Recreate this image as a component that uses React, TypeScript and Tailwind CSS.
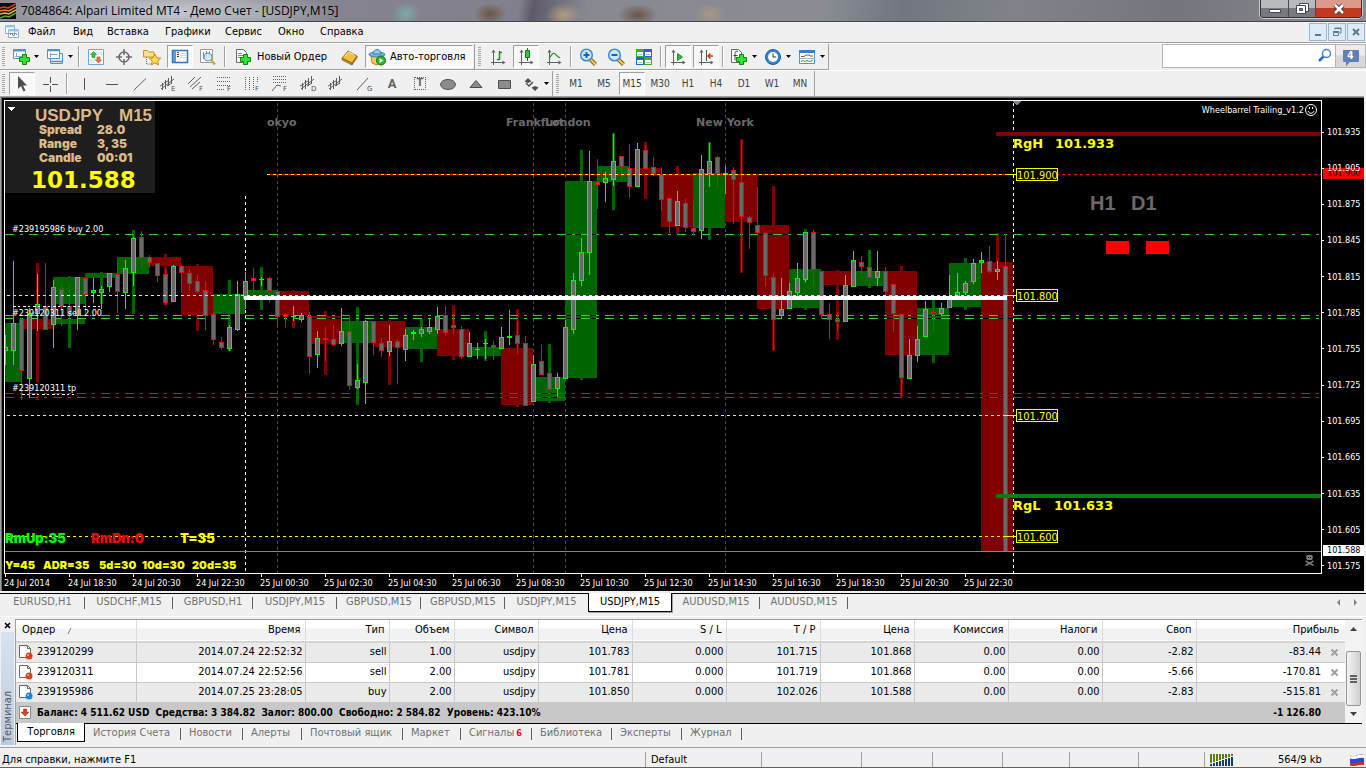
import type { ReactNode } from "react";

const ui = "font-['DejaVu_Sans_Condensed','Noto_Sans',sans-serif]";

// [high, open, close, low] measured from the top of the chart, one entry per bar
const candles: number[][] = [
    [235, 251, 247, 265], [161, 251, 223, 265], [218, 219, 271, 300], [208, 279, 214, 298],
    [174, 214, 204, 231], [163, 206, 230, 230], [180, 225, 187, 248], [184, 189, 207, 226],
    [185, 206, 216, 226], [177, 216, 177, 230], [178, 178, 195, 213], [178, 193, 190, 203],
    [186, 193, 189, 209], [173, 187, 173, 192], [162, 174, 192, 213], [160, 193, 168, 209],
    [137, 173, 138, 186], [131, 137, 158, 169], [155, 157, 163, 168], [163, 163, 176, 182],
    [169, 174, 203, 205], [165, 202, 166, 202], [165, 166, 173, 192], [169, 173, 184, 191],
    [175, 181, 192, 193], [181, 190, 216, 230], [212, 214, 240, 245], [237, 242, 248, 250],
    [225, 249, 227, 251], [181, 230, 194, 231], [172, 199, 181, 209], [168, 178, 181, 193],
    [177, 180, 179, 186], [177, 178, 191, 202], [191, 191, 217, 228], [213, 214, 217, 227],
    [206, 217, 216, 221], [213, 220, 215, 222], [212, 216, 257, 274], [231, 255, 238, 268],
    [227, 238, 240, 261], [225, 239, 245, 246], [208, 244, 231, 246], [215, 231, 286, 290],
    [264, 288, 280, 289], [220, 283, 221, 304], [221, 221, 243, 255], [238, 243, 251, 257],
    [225, 252, 241, 256], [239, 241, 248, 284], [229, 250, 235, 261], [230, 234, 232, 240],
    [227, 234, 229, 237], [219, 232, 227, 234], [207, 230, 216, 234], [206, 215, 233, 236],
    [214, 225, 228, 234], [226, 229, 257, 259], [232, 257, 243, 257], [243, 250, 249, 259],
    [239, 244, 243, 259], [241, 245, 248, 260], [227, 249, 237, 249], [210, 238, 236, 245],
    [221, 235, 244, 254], [236, 243, 306, 306], [255, 302, 264, 302], [245, 261, 275, 275],
    [268, 273, 290, 292], [273, 289, 277, 297], [220, 279, 227, 279], [173, 230, 180, 234],
    [138, 181, 152, 186], [51, 153, 81, 175], [59, 82, 85, 109], [72, 83, 78, 102],
    [34, 80, 61, 86], [56, 56, 67, 81], [44, 68, 87, 98], [43, 87, 49, 87],
    [45, 50, 69, 69], [57, 67, 74, 76], [67, 74, 100, 111], [98, 98, 122, 133],
    [91, 126, 101, 126], [99, 103, 128, 132], [105, 128, 132, 135], [55, 131, 69, 139],
    [43, 74, 61, 87], [56, 57, 74, 87], [66, 75, 73, 94], [67, 70, 80, 124],
    [40, 82, 117, 172], [116, 117, 123, 149], [87, 125, 133, 134], [132, 133, 176, 187],
    [173, 177, 220, 250], [178, 216, 209, 219], [183, 209, 191, 209], [163, 193, 178, 196],
    [132, 180, 132, 182], [130, 132, 170, 187], [171, 171, 215, 219], [203, 214, 220, 239],
    [212, 219, 222, 232], [175, 222, 185, 222], [151, 187, 160, 187], [156, 162, 167, 174],
    [150, 167, 178, 187], [151, 178, 171, 186], [167, 171, 192, 196], [184, 184, 214, 232],
    [214, 214, 278, 296], [239, 279, 255, 279], [226, 256, 239, 262], [201, 237, 209, 237],
    [208, 212, 214, 232], [203, 214, 208, 216], [175, 208, 196, 208], [173, 197, 192, 197],
    [181, 193, 183, 195], [159, 182, 163, 184], [152, 163, 160, 173], [146, 161, 172, 173],
    [161, 172, 169, 180], [134, 166, 452, 452]
];

// hourly bars behind the candles, same order of values
const hours: number[][] = [
    [163, 219, 229, 300], [176, 224, 177, 248], [172, 178, 173, 209], [130, 174, 157, 214],
    [154, 157, 166, 205], [164, 166, 215, 231], [180, 214, 194, 251], [167, 197, 190, 210],
    [190, 191, 215, 228], [211, 216, 244, 275], [207, 243, 221, 305], [220, 221, 247, 285],
    [218, 249, 227, 262], [205, 229, 256, 260], [231, 256, 247, 261], [209, 248, 305, 307],
    [244, 301, 277, 303], [50, 278, 81, 280], [33, 82, 66, 110], [42, 68, 73, 99],
    [66, 74, 127, 134], [42, 128, 73, 140], [39, 74, 122, 173], [86, 125, 209, 251],
    [129, 208, 169, 210], [170, 171, 185, 240], [150, 186, 171, 188], [166, 171, 255, 297],
    [200, 255, 208, 263], [158, 207, 163, 210], [133, 162, 451, 452]
];

const orderLines = [
    { y: 134, color: "#32cd32" },
    { y: 215, color: "#32cd32" },
    { y: 218, color: "#32cd32" },
    { y: 293, color: "#ff0000" },
    { y: 297, color: "#ff0000" }
];

const levels = [
    { y: 74, x: 263, label: "101.900" },
    { y: 195, x: 3, label: "101.800" },
    { y: 315, x: 3, label: "101.700" },
    { y: 436, x: 3, label: "101.600" }
];

const prices = [
    "101.935", "101.905", "101.875", "101.845", "101.815", "101.785", "101.755",
    "101.725", "101.695", "101.665", "101.635", "101.605", "101.575"
];

const times = [
    "24 Jul 2014", "24 Jul 18:30", "24 Jul 20:30", "24 Jul 22:30", "25 Jul 00:30", "25 Jul 02:30",
    "25 Jul 04:30", "25 Jul 06:30", "25 Jul 08:30", "25 Jul 10:30", "25 Jul 12:30", "25 Jul 14:30",
    "25 Jul 16:30", "25 Jul 18:30", "25 Jul 20:30", "25 Jul 22:30"
];

const chartTabs = [
    { label: "EURUSD,H1", width: "w-[85px]" },
    { label: "USDCHF,M15", width: "w-[88px]" },
    { label: "GBPUSD,H1", width: "w-[80px]" },
    { label: "USDJPY,M15", width: "w-[84px]" },
    { label: "GBPUSD,M15", width: "w-[84px]" },
    { label: "GBPUSD,M15", width: "w-[84px]" },
    { label: "USDJPY,M15", width: "w-[83px]" },
    { label: "USDJPY,M15", width: "w-[84px]", active: true },
    { label: "AUDUSD,M15", width: "w-[88px]" },
    { label: "AUDUSD,M15", width: "w-[88px]" }
];

const terminalTabs = [
    { label: "История Счета", width: "w-[96px]" },
    { label: "Новости", width: "w-[62px]" },
    { label: "Алерты", width: "w-[59px]" },
    { label: "Почтовый ящик", width: "w-[101px]" },
    { label: "Маркет", width: "w-[58px]" },
    { label: "Сигналы", width: "w-[71px]", count: 6 },
    { label: "Библиотека", width: "w-[80px]" },
    { label: "Эксперты", width: "w-[70px]" },
    { label: "Журнал", width: "w-[60px]" }
];

const columns = [
    { label: "Время", width: "w-[169px]" },
    { label: "Тип", width: "w-[84px]" },
    { label: "Объем", width: "w-[65px]" },
    { label: "Символ", width: "w-[84px]" },
    { label: "Цена", width: "w-[94px]" },
    { label: "S / L", width: "w-[94px]" },
    { label: "T / P", width: "w-[94px]" },
    { label: "Цена", width: "w-[94px]" },
    { label: "Комиссия", width: "w-[94px]" },
    { label: "Налоги", width: "w-[94px]" },
    { label: "Своп", width: "w-[94px]" }
];

const orders = [
    { id: "239120299", cells: ["2014.07.24 22:52:32", "sell", "1.00", "usdjpy", "101.783", "0.000", "101.715", "101.868", "0.00", "0.00", "-2.82"], profit: "-83.44" },
    { id: "239120311", cells: ["2014.07.24 22:52:56", "sell", "2.00", "usdjpy", "101.781", "0.000", "101.719", "101.868", "0.00", "0.00", "-5.66"], profit: "-170.81" },
    { id: "239195986", cells: ["2014.07.25 23:28:05", "buy", "2.00", "usdjpy", "101.850", "0.000", "102.026", "101.588", "0.00", "0.00", "-2.83"], profit: "-515.81" }
];

function Icon({ children, size = 18 }: { children: ReactNode; size?: number }) {
    return (
        <svg width={size} height={size} viewBox={`0 0 ${size} ${size}`} fill="none" className="shrink-0" aria-hidden="true">
            {children}
        </svg>
    );
}

function Caret() {
    return (
        <svg width="5" height="3" viewBox="0 0 5 3" className="shrink-0" aria-hidden="true">
            <path d="M0 0h5L2.500 3z" fill="#000" />
        </svg>
    );
}

function Plus({ x, y }: { x: number; y: number }) {
    return (
        <path
            transform={`translate(${x} ${y})`}
            d="M3.500 .5h4v3h3v4h-3v3h-4v-3h-3v-4h3z"
            fill="#2ee52e"
            stroke="#0a8a0a"
        />
    );
}

function Tool({ label, pressed, caret, children }: { label: string; pressed?: boolean; caret?: boolean; children: ReactNode }) {
    return (
        <button
            type="button"
            aria-label={label}
            aria-pressed={pressed}
            className={`mx-px flex h-[23px] items-center justify-center gap-1 ${caret ? "w-[32px]" : "w-[26px]"} ${pressed ? "border border-[#a0a0a0] border-r-white border-b-white bg-[#f8f8f8]" : ""}`}
        >
            {children}
            {caret && <Caret />}
        </button>
    );
}

function Sep() {
    return <div className="mx-[2px] h-[21px] w-[2px] border-l border-[#a0a0a0] bg-white" />;
}

function Grip() {
    return <div className="mr-[3px] ml-[2px] h-[20px] w-[3px] shrink-0 bg-[repeating-linear-gradient(#a8a8a8_0_1px,#f0f0f0_1px_2px)]" />;
}

function Axes({ children }: { children?: ReactNode }) {
    return (
        <Icon>
            <path d="M4.500 3v14M2 14.500h13" stroke="#606060" />
            <path d="M4.500 1.500L2.500 4.500h4zM16.500 14.500l-3-2v4z" fill="#606060" />
            {children}
        </Icon>
    );
}

function Magnifier({ sign }: { sign: string }) {
    return (
        <Icon>
            <path d="M11 11l5.500 5.500" stroke="#8a6510" strokeWidth="4" />
            <path d="M11.500 11.500l5 5" stroke="#f3cf4a" strokeWidth="2" />
            <circle cx="7.500" cy="7" r="5.800" fill="#cfe8fb" stroke="#3d8ad6" strokeWidth="1.500" />
            <path d={sign} stroke="#1c62b5" strokeWidth="2" />
        </Icon>
    );
}

function Wave({ letter }: { letter?: string }) {
    return (
        <Icon>
            <path d="M2 14L15 4M3.500 8v7M6.500 5v9M9.500 3v8M12.500 1v8M1 11l4-2M5 8l4-2M8 11l5-3" stroke="#5c5c5c" />
            {letter && <Letter>{letter}</Letter>}
        </Icon>
    );
}

function Letter({ children }: { children: ReactNode }) {
    return (
        <text x="12" y="16" fill="#505050" className="font-['DejaVu_Sans'] text-[7px]">
            {children}
        </text>
    );
}

function TitleBar() {
    return (
        <header className="flex h-[22px] items-start border-b border-[#45464c] bg-[radial-gradient(ellipse_170px_24px_at_170px_12px,#c6cace_0%,#aeb1b8cc_60%,transparent_100%),radial-gradient(ellipse_16px_11px_at_490px_14px,#6b5641,transparent),radial-gradient(ellipse_18px_12px_at_564px_15px,#b09d82,transparent),radial-gradient(ellipse_20px_11px_at_638px_15px,#6a5546,transparent),radial-gradient(ellipse_16px_11px_at_710px_14px,#a89782,transparent),radial-gradient(ellipse_14px_12px_at_406px_14px,#7fa9a8,transparent),linear-gradient(100deg,#8d8f98_0,#85838f_26%,#82808b_38%,#5f5a6b_39%,#878991_43%,#8a8d94_60%,#71767f_66%,#808389_74%,#73767d_86%,#8b8c91_100%)]">
            <svg width="16" height="16" viewBox="0 0 16 16" className="mt-[3px] shrink-0" aria-hidden="true">
                <path d="M0 0h16v16H0z" fill="#100c08" />
                <path d="M0 5l4-1 4 1 8-4" stroke="#e9342a" strokeWidth="1.500" fill="none" />
                <path d="M0 8l5-1 4 1 7-4" stroke="#ee7a26" strokeWidth="1.500" fill="none" />
                <path d="M0 11l5-1 4 1 7-4" stroke="#d8c42e" strokeWidth="1.500" fill="none" />
                <path d="M0 15l5-2 4 1 7-4" stroke="#58a832" strokeWidth="1.500" fill="none" />
            </svg>
            <h1 className="ml-[5px] flex-1 font-['Open_Sans','Noto_Sans',sans-serif] text-[12px] leading-[21px] text-black">
                7084864: Alpari Limited MT4 - Демо Счет - [USDJPY,M15]
            </h1>
            <div className="mr-1 flex h-[18px] overflow-hidden rounded-b-[4px] border border-t-0 border-[#33343a] shadow-[0_0_0_1px_#c8c9cc]">
                <button type="button" aria-label="Свернуть" className="flex w-[28px] items-center justify-center border-r border-[#4a4b52] bg-linear-to-b from-[#b9babd] from-45% to-[#77797e] to-50%">
                    <Icon size={14}>
                        <path d="M1.500 7.500h11v3h-11z" fill="#fff" stroke="#45485a" />
                    </Icon>
                </button>
                <button type="button" aria-label="Восстановить" className="flex w-[27px] items-center justify-center border-r border-[#4a4b52] bg-linear-to-b from-[#b9babd] from-45% to-[#77797e] to-50%">
                    <Icon size={14}>
                        <path d="M4.500 1.500h9v8h-9z" fill="#fff" stroke="#45485a" />
                        <path d="M1.500 3.500h9v8h-9z" fill="#fff" stroke="#45485a" />
                        <path d="M4.500 6.500h3v2h-3z" fill="#8b8d93" stroke="#45485a" />
                    </Icon>
                </button>
                <button type="button" aria-label="Закрыть" className="flex w-[45px] items-center justify-center bg-linear-to-b from-[#dd9a8c] from-45% to-[#bf3a1f] to-50%">
                    <Icon size={14}>
                        <path d="M3 3l8 8M11 3l-8 8" stroke="#45364a" strokeWidth="4.500" />
                        <path d="M3 3l8 8M11 3l-8 8" stroke="#fff" strokeWidth="2.500" />
                    </Icon>
                </button>
            </div>
        </header>
    );
}

function MenuBar() {
    const mdi = "flex h-[18px] w-[18px] items-center justify-center border border-[#a3b4c8] bg-[#dcebf9]";
    return (
        <nav className="flex h-[21px] items-center border-b border-[#a0a0a0]">
            <div className="ml-[4px] w-[17px]">
                <Icon size={16}>
                    <path d="M1.500 1.500h9v8h-9zM4.500 5.500h10v8h-10z" fill="#fff" stroke="#7fb2e6" />
                    <path d="M1 2.500h10M4 6.500h11" stroke="#9cc6ee" strokeWidth="2" />
                    <path d="M6 11l1.500-2 2 3 2-3 1.500 2" stroke="#3d85cc" />
                </Icon>
            </div>
            <div className="flex pt-px text-[11px]">
                <a href="#file" className="ml-[7px] w-[45px]">Файл</a>
                <a href="#view" className="w-[34px]">Вид</a>
                <a href="#insert" className="w-[58px]">Вставка</a>
                <a href="#charts" className="w-[60px]">Графики</a>
                <a href="#service" className="w-[53px]">Сервис</a>
                <a href="#window" className="w-[42px]">Окно</a>
                <a href="#help">Справка</a>
            </div>
            <div className="mr-[1px] ml-auto flex gap-px">
                <button type="button" aria-label="Свернуть окно" className={mdi}>
                    <Icon size={12}><path d="M3 9h6" stroke="#63788e" strokeWidth="2" /></Icon>
                </button>
                <button type="button" aria-label="Восстановить окно" className={mdi}>
                    <Icon size={12}><path d="M4 3.500V2h6v5H8.500M2.500 6.500h5v3h-5zM2 5.500h6M4 2.500h6" stroke="#63788e" /></Icon>
                </button>
                <button type="button" aria-label="Закрыть окно" className={mdi}>
                    <Icon size={12}><path d="M3 3l6 6M9 3L3 9" stroke="#63788e" strokeWidth="2" /></Icon>
                </button>
            </div>
        </nav>
    );
}

function MainToolbar() {
    return (
        <div className="flex h-[27px] items-start border-t border-white">
            <div className="flex h-[26px] items-center border-r border-b border-[#a0a0a0]">
                <Grip />
                <Tool label="Новый график" caret>
                    <Icon>
                        <path d="M1.500 1.500h12v9h-12z" fill="#fff" stroke="#4f93cf" />
                        <path d="M1 2.500h13" stroke="#4f93cf" strokeWidth="2" />
                        <path d="M4.500 5v4M3 8.500h7" stroke="#8aa8c4" />
                        <Plus x={7} y={6} />
                    </Icon>
                </Tool>
                <Tool label="Профили" caret>
                    <Icon>
                        <path d="M4.500 5.500h12v10h-12z" fill="#e8f2fb" stroke="#4f93cf" />
                        <path d="M1.500 1.500h12v9h-12z" fill="#fff" stroke="#4f93cf" />
                        <path d="M1 2.500h13M4 13.500h12" stroke="#4f93cf" strokeWidth="1.500" />
                        <path d="M4 6.500h7M4.500 5v4" stroke="#7aa6cc" />
                    </Icon>
                </Tool>
                <Sep />
                <Tool label="Обзор рынка">
                    <Icon>
                        <path d="M1.500 1.500h15v15h-15z" fill="#fff" stroke="#6aa6da" />
                        <path d="M9 4h6M9 6h6M3 12h6M3 14h5" stroke="#c9dced" />
                        <path d="M6.500 3.500l3 3h-1.500v3h-3v-3H3.500z" fill="#3cc63c" stroke="#168516" strokeWidth=".6" />
                        <path d="M11.500 15l3-3h-1.500V9h-3v3H8.500z" fill="#f47a3a" stroke="#c7380b" strokeWidth=".6" />
                    </Icon>
                </Tool>
                <Tool label="Окно данных">
                    <Icon>
                        <circle cx="9" cy="9" r="5" stroke="#6a6a6a" strokeWidth="1.500" />
                        <path d="M9 1v6M9 11v6M1 9h6M11 9h6" stroke="#6a6a6a" strokeWidth="1.500" />
                    </Icon>
                </Tool>
                <Tool label="Навигатор">
                    <Icon>
                        <path d="M.5 2.500h4l1.500 1.500h5v5H.5z" fill="#f8e08a" stroke="#c59a26" />
                        <path d="M3.500 9v7h4" stroke="#6a6a6a" strokeDasharray="1 1" />
                        <path d="M12 6l1.800 3.700 4 .5-3 2.700.8 4-3.600-2-3.600 2 .8-4-3-2.700 4-.5z" fill="#fbd84c" stroke="#c08f1c" />
                    </Icon>
                </Tool>
                <Tool label="Терминал" pressed>
                    <Icon>
                        <path d="M1.500 2.500h15v12h-15z" fill="#fff" stroke="#2f78c0" strokeWidth="1.500" />
                        <path d="M2 3h3v11H2z" fill="#5b9bd8" />
                        <path d="M9 5.500h6M9 7.500h6M9 9.500h6" stroke="#c3d3e2" strokeWidth=".7" />
                        <path d="M6 4.500h2" stroke="#d22" />
                        <path d="M6 6.500h2M6 8.500h2" stroke="#333" />
                    </Icon>
                </Tool>
                <Tool label="Тестер стратегий">
                    <Icon>
                        <path d="M1.500 1.500h12v13h-12z" fill="#fff" stroke="#9a9a9a" />
                        <path d="M4.500 4v7M7.500 3v7M10.500 3v6" stroke="#8a8a8a" />
                        <path d="M12 12l4 4.500" stroke="#d7a82c" strokeWidth="2.500" />
                        <circle cx="9" cy="9" r="4" fill="#cde7f8cc" stroke="#5f9bcd" />
                    </Icon>
                </Tool>
                <Sep />
                <button type="button" className="flex h-[23px] w-[108px] items-center gap-1 pl-[7px] text-[11px] whitespace-nowrap">
                    <Icon>
                        <path d="M1.500 1.500h7l3 3v10h-10z" fill="#fff" stroke="#6a6a6a" />
                        <path d="M3 5.500h4M3 7.500h6M3 9.500h5" stroke="#8a8a8a" />
                        <Plus x={5} y={6} />
                    </Icon>
                    <span className="pt-px">Новый Ордер</span>
                </button>
                <Tool label="MetaEditor">
                    <Icon>
                        <path d="M1 10l6-7 9 5-5 7z" fill="#f0bf4a" stroke="#a97716" />
                        <path d="M1 10v2l10 5v-2zM11 17l5-7V8l-5 7z" fill="#c88f20" stroke="#8c6010" strokeWidth=".7" />
                        <path d="M4 8l4-4 5 3" stroke="#fbe6a6" />
                    </Icon>
                </Tool>
                <button type="button" aria-pressed="true" className="mx-px flex h-[23px] w-[108px] items-center gap-1 border border-[#a0a0a0] border-r-white border-b-white bg-[#f8f8f8] pl-[2px] text-[11px] whitespace-nowrap">
                    <Icon>
                        <path d="M3 7h12l-2 8-4 2-5-2z" fill="#f7cc4c" stroke="#ba8b1b" />
                        <ellipse cx="9" cy="6.500" rx="8" ry="2.500" fill="#6fb6e2" stroke="#3c84b8" />
                        <path d="M5 6c0-6 8-6 8 0z" fill="#8cc9ee" stroke="#3c84b8" />
                        <circle cx="13" cy="12.500" r="4.500" fill="#2fb52f" stroke="#0f7a0f" />
                        <path d="M11.500 10v5l4-2.500z" fill="#fff" />
                    </Icon>
                    <span className="pt-px">Авто-торговля</span>
                </button>
            </div>
            <div className="flex h-[26px] items-center border-r border-b border-[#a0a0a0] pl-[1px]">
                <Grip />
                <Tool label="Бары">
                    <Axes><path d="M10.500 3v9M8 11.500h2.500M10.500 4.500h2.500" stroke="#1f8a2b" strokeWidth="1.500" /></Axes>
                </Tool>
                <Tool label="Японские свечи" pressed>
                    <Axes>
                        <path d="M10.500 0v13" stroke="#0d7a1c" />
                        <path d="M8.500 2.500h4v7h-4z" fill="#25d03c" stroke="#0d7a1c" />
                    </Axes>
                </Tool>
                <Tool label="Линия">
                    <Axes><path d="M4 11c3-6 5-7 7-4l4 3" stroke="#2b9a38" strokeWidth="1.200" /></Axes>
                </Tool>
                <Sep />
                <Tool label="Увеличить"><Magnifier sign="M4.500 7h6M7.500 4v6" /></Tool>
                <Tool label="Уменьшить"><Magnifier sign="M4.500 7h6" /></Tool>
                <Tool label="Выстроить окна">
                    <Icon>
                        <path d="M1 1h8v8H1zM9 9h8v8H9z" fill="#3faa2c" />
                        <path d="M9 1h8v8H9zM1 9h8v8H1z" fill="#2a62c9" />
                        <path d="M2 4h6v4H2zM10 4h6v4h-6zM2 12h6v4H2zM10 12h6v4h-6z" fill="#fff" />
                        <path d="M3 6.500h4M11 6.500h4M3 14.500h4M11 14.500h4" stroke="#9cc0d8" />
                    </Icon>
                </Tool>
                <Sep />
                <Tool label="Автопрокрутка" pressed>
                    <Axes><path d="M8.500 5.500v7l5-3.500z" fill="#2bbf3c" stroke="#0d7a1c" strokeWidth=".8" /></Axes>
                </Tool>
                <Tool label="Сдвиг графика" pressed>
                    <Axes>
                        <path d="M9.500 2v11" stroke="#4a5560" />
                        <path d="M16 8h-5M13.500 5.500L11 8l2.500 2.500" stroke="#d13b12" strokeWidth="1.500" />
                    </Axes>
                </Tool>
                <Sep />
                <Tool label="Индикаторы" caret>
                    <Icon>
                        <path d="M1.500 1.500h7l3 3v10h-10z" fill="#fff" stroke="#6a6a6a" />
                        <path d="M8 3.500c-3-1-3 1-3 3v6M3.500 7.500h4" stroke="#444" />
                        <Plus x={6} y={6} />
                    </Icon>
                </Tool>
                <Tool label="Периоды" caret>
                    <Icon>
                        <circle cx="9" cy="9" r="7.500" fill="#2e86dc" stroke="#1459a6" />
                        <circle cx="9" cy="9" r="5" fill="#fff" />
                        <path d="M9 5.500V9h3" stroke="#333" />
                    </Icon>
                </Tool>
                <Tool label="Шаблоны" caret>
                    <Icon>
                        <path d="M1.500 2.500h15v13h-15z" fill="#fff" stroke="#4f93cf" />
                        <path d="M1 3.500h16" stroke="#3a7ec2" strokeWidth="3" />
                        <path d="M3 8.500h3l2-1.500h3l1 1h3" stroke="#b4402a" />
                        <path d="M1.500 10.500h15" stroke="#8fb4d6" />
                        <path d="M3 13.500l2-1 2 1 2-1 3 1 3-1.500" stroke="#2b9a38" />
                    </Icon>
                </Tool>
            </div>
            <div className="ml-auto flex h-[24px]">
                <label className="flex w-[174px] items-center border border-[#b4b4b4] bg-white pr-[2px]">
                    <input type="search" aria-label="Поиск" className="h-full min-w-0 flex-1 px-1 text-[11px] outline-none" />
                    <Icon size={16}>
                        <path d="M7 8l-5 5" stroke="#2f66cf" strokeWidth="2.500" />
                        <circle cx="9.500" cy="5.500" r="4" fill="#fff" stroke="#4b80dd" strokeWidth="1.500" />
                    </Icon>
                </label>
                <button type="button" aria-label="Сообщения" className="-ml-px flex w-[31px] items-center justify-center border border-[#b4b4b4] bg-linear-to-b from-[#ececec] from-45% to-[#d8d8d8] to-50%">
                    <span className="relative flex h-[12px] w-[16px] items-center justify-center rounded-[1px] bg-[#5f7fb5] text-[10px] leading-none font-bold text-white after:absolute after:top-full after:left-[3px] after:border-t-4 after:border-r-4 after:border-t-[#5f7fb5] after:border-r-transparent">
                        4
                    </span>
                </button>
            </div>
        </div>
    );
}

function DrawToolbar() {
    const periods = ["M1", "M5", "M15", "M30", "H1", "H4", "D1", "W1", "MN"];
    return (
        <div className="flex h-[26px] items-start border-t border-white">
            <div className="flex h-[25px] items-center border-r border-[#a0a0a0]">
                <Grip />
                <Tool label="Курсор" pressed>
                    <Icon><path d="M5 1v13l3-3 2.500 5.500 2-1-2.500-5h4z" fill="#4c4c4c" /></Icon>
                </Tool>
                <Tool label="Перекрестие">
                    <Icon><path d="M9.500 2v6M9.500 11v6M2 9.500h6M11 9.500h6" stroke="#505050" /></Icon>
                </Tool>
                <Sep />
                <Tool label="Вертикальная линия"><Icon><path d="M9.500 3v12" stroke="#505050" /></Icon></Tool>
                <Tool label="Горизонтальная линия"><Icon><path d="M3 9.500h12" stroke="#505050" /></Icon></Tool>
                <Tool label="Трендовая линия"><Icon><path d="M3 15L15 3.500" stroke="#606060" /></Icon></Tool>
                <Tool label="Канал"><Wave letter="E" /></Tool>
                <Tool label="Равноудаленный канал">
                    <Icon><path d="M1 9l7-7M3 12L14 2M5 14l8-7" stroke="#606060" /><Letter>F</Letter></Icon>
                </Tool>
                <Tool label="Линии Фибоначчи">
                    <Icon><path d="M2 2.500h14M2 6.500h14M2 10.500h14M2 14.500h8" stroke="#606060" strokeDasharray="1 1" /><Letter>F</Letter></Icon>
                </Tool>
                <Tool label="Временные зоны">
                    <Icon><path d="M2.500 2v13M6.500 2v13M10.500 2v13M14.500 2v6" stroke="#606060" strokeDasharray="1 1" /><Letter>F</Letter></Icon>
                </Tool>
                <Tool label="Веер Фибоначчи">
                    <Icon><path d="M2 1.500h14M2 4.500h14M2 7.500h14" stroke="#606060" strokeDasharray="1 1" /><path d="M1 16l5-6 4 1" stroke="#606060" /><Letter>F</Letter></Icon>
                </Tool>
                <Tool label="Отклонение"><Wave letter="D" /></Tool>
                <Tool label="Волны"><Wave /></Tool>
                <Tool label="Линия Ганна"><Icon><path d="M2 15L13 3" stroke="#606060" /><Letter>G</Letter></Icon></Tool>
                <Tool label="Текст"><span className="font-['Roboto'] text-[13px] font-bold text-[#606060]">A</span></Tool>
                <Tool label="Текстовая метка">
                    <span className="flex h-[13px] w-[12px] items-center justify-center border border-dotted border-[#606060] font-['Roboto'] text-[11px] font-bold text-[#606060]">T</span>
                </Tool>
                <Tool label="Эллипс"><Icon><ellipse cx="9" cy="9.500" rx="7.500" ry="5" fill="#8c8c8c" stroke="#4f4f4f" /></Icon></Tool>
                <Tool label="Треугольник"><Icon><path d="M9 5.500l6 7H3z" fill="#8c8c8c" stroke="#4f4f4f" /></Icon></Tool>
                <Tool label="Прямоугольник"><Icon><path d="M3.500 5.500h12v8h-12z" fill="#8c8c8c" stroke="#4f4f4f" /></Icon></Tool>
                <Tool label="Стрелки" caret>
                    <Icon>
                        <path d="M6 3l3.500 3.500L6 8 2.500 6.500zM13 16l-3.500-3.500L13 11l3.500 1.500z" fill="#505050" />
                        <path d="M4 8l3 3 4-4" stroke="#505050" strokeWidth="1.500" />
                    </Icon>
                </Tool>
            </div>
            <div className="flex h-[25px] items-center border-r border-[#a0a0a0] pl-[1px] text-[10px] text-[#404040]">
                <Grip />
                {periods.map((period) => (
                    <Tool key={period} label={period} pressed={period === "M15"}>
                        {period}
                    </Tool>
                ))}
            </div>
        </div>
    );
}

function Bar({ x, bar, body, wick, up, down, fill }: { x: number; bar: number[]; body: number; wick: number; up: string; down: string; fill?: string }) {
    const [high, open, close, low] = bar;
    const color = close < open ? up : down;
    const top = Math.min(open, close);
    const height = Math.max(Math.abs(open - close), 1);
    return (
        <>
            <rect x={x - (wick - 1) / 2} y={high} width={wick} height={low - high} fill={color} />
            <rect x={x - Math.floor(body / 2)} y={top} width={body} height={height} fill={color} />
            {fill && height > 2 && <rect x={x - 1} y={top + 1} width={3} height={height - 2} fill={fill} />}
        </>
    );
}

function Chart() {
    const black = "font-['Inter','DejaVu_Sans',sans-serif] font-black";
    const wide = "font-['DejaVu_Sans',sans-serif] font-bold";
    return (
        <svg className="block h-[474px] w-full" shapeRendering="crispEdges" role="img" aria-label="USDJPY M15">
            <rect width="100%" height="474" fill="#000" />
            {[273, 529, 561, 721].map((x) => (
                <path key={x} d={`M${x}.5 3V473`} stroke="#50501a" strokeDasharray="3 3" />
            ))}
            <g fill="#696969" className={`${wide} text-[11px]`}>
                <text x="263" y="26">okyo</text>
                <text x="502" y="26">Frankfurt</text>
                <text x="541" y="26">London</text>
                <text x="692" y="26">New York</text>
            </g>

            <rect x="1" y="223" width="16" height="59" fill="#006400" />
            {hours.map((bar, index) => (
                <Bar key={index} x={33 + index * 32} bar={bar} body={32} wick={3} up="#006400" down="#800000" />
            ))}
            <rect x="1" y="204" width="98" height="14" fill="#000" />
            <rect x="1" y="282" width="72" height="14" fill="#000" />

            <path d="M241.500 96V473" stroke="#fff" strokeDasharray="3 3" />
            <path d="M1009.500 3V473" stroke="#fff" strokeDasharray="3 3" />

            {orderLines.map((line) => (
                <g key={line.y}>
                    <rect x="1" y={line.y} width="100%" height="1" fill="#000" />
                    <line x1="1" x2="100%" y1={line.y + 0.5} y2={line.y + 0.5} stroke={line.color} strokeDasharray="9 6 3 6" />
                </g>
            ))}
            <line x1="266" x2="100%" y1="74.500" y2="74.500" stroke="#f00" strokeDasharray="3 3" />

            {candles.map((bar, index) => (
                <Bar key={index} x={1 + index * 8} bar={bar} body={5} wick={1} up="#00ff00" down="#ff0000" fill="#696969" />
            ))}

            <rect x="240" y="196" width="763" height="4" fill="#fff" />
            <g className="font-['DejaVu_Sans_Condensed','Noto_Sans',sans-serif] text-[11px]">
                {levels.map((level) => (
                    <g key={level.label}>
                        <path d={`M${level.x} ${level.y}.5H1002`} stroke="#ff0" strokeDasharray="3 3" />
                        <path d={`M1002 ${level.y}.5H1012`} stroke="#ff0" />
                        <rect x="1012.500" y={level.y - 5.5} width="41" height="12" fill="#000" stroke="#ff0" />
                        <text x="1013" y={level.y + 5} fill="#ff0">{level.label}</text>
                    </g>
                ))}
            </g>
            <rect x="0" y="451" width="100%" height="1" fill="#778899" />

            <rect x="992" y="32" width="100%" height="4" fill="#800000" />
            <rect x="992" y="394" width="100%" height="4" fill="#008000" />
            <g fill="#ff0" className={`${wide} text-[13px]`}>
                <text x="1009" y="48">RgH</text>
                <text x="1051" y="48">101.933</text>
                <text x="1009" y="410">RgL</text>
                <text x="1050" y="410">101.633</text>
            </g>
            <path d="M1009 1h8l-4 5z" fill="#778899" />

            <g fill="#696969" className="font-['Liberation_Sans',sans-serif] text-[20px] font-bold">
                <text x="1086" y="110">H1</text>
                <text x="1127" y="110">D1</text>
            </g>
            <path d="M1102 141h23v13h-23zM1142 141h23v13h-23z" fill="#f00" />

            <rect x="1" y="1" width="150" height="92" fill="#1e1e1e" />
            <path d="M4 7h7L7.500 11z" fill="#fff" />
            <g fill="#deb887">
                <g className="font-['Liberation_Sans',sans-serif] text-[17px] font-bold">
                    <text x="31" y="21">USDJPY</text>
                    <text x="115" y="21">M15</text>
                </g>
                <g className={`${black} text-[12px]`}>
                    <text x="35" y="34">Spread</text>
                    <text x="93" y="34">28.0</text>
                    <text x="35" y="48">Range</text>
                    <text x="93" y="48">3, 35</text>
                    <text x="35" y="62">Candle</text>
                    <text x="93" y="62">00:01</text>
                </g>
            </g>
            <text x="27" y="88" fill="#ff0" className={`${wide} text-[23px]`}>101.588</text>

            <g fill="#fff" className="font-['DejaVu_Sans_Condensed','Noto_Sans',sans-serif] text-[9px]">
                <text x="8" y="132">#239195986 buy 2.00</text>
                <text x="8" y="216">#239120311 sell 2.00</text>
                <text x="8" y="291">#239120311 tp</text>
            </g>
            <path d="M9 206.500H96M18 294.500H70" stroke="#fff" strokeDasharray="3 2 2 3" />

            <g className={`${black} text-[13px]`}>
                <text x="1" y="443" fill="#0f0">RmUp:35</text>
                <text x="87" y="443" fill="#f00">RmDn:0</text>
                <text x="176" y="443" fill="#ff0">T=35</text>
            </g>
            <g fill="#ff0" className={`${black} text-[11px]`}>
                <text x="1" y="469">Y=45</text>
                <text x="39" y="469">ADR=35</text>
                <text x="95" y="469">5d=30</text>
                <text x="138" y="469">10d=30</text>
                <text x="188" y="469">20d=35</text>
            </g>

            <rect x="0" y="0" width="1" height="474" fill="#fff" />
            <rect x="0" y="0" width="100%" height="1" fill="#fff" />
            <rect x="0" y="473" width="100%" height="1" fill="#fff" />
        </svg>
    );
}

function ChartWindow() {
    return (
        <main className="mr-[2px] border-t border-l border-[#a0a0a0]">
            <div className="border-t border-l border-[#696969] bg-black pt-[2px] pl-[2px] text-[9px] leading-[12px] text-white">
                <div className="flex">
                    <div className="relative min-w-0 flex-1 border-r border-white">
                        <Chart />
                        <div className="absolute top-[4px] right-[4px] flex items-center gap-px">
                            Wheelbarrel Trailing_v1.2
                            <Icon size={12}>
                                <circle cx="6" cy="6" r="5.500" stroke="#fff" />
                                <path d="M4.500 3v2M7.500 3v2M3 7c1 3 5 3 6 0" stroke="#fff" />
                            </Icon>
                        </div>
                        <div className="absolute right-[6px] bottom-[8px]">
                            <Icon size={11}>
                                <path d="M3 0h5l1 2-1 3H3L2 2z" fill="#7a7a7a" />
                                <path d="M4 2h1v1H4zM6 2h1v1H6z" fill="#000" />
                                <path d="M1.500 6l8 4.500M9.500 6l-8 4.500" stroke="#7a7a7a" strokeWidth="1.500" />
                            </Icon>
                        </div>
                    </div>
                    <div className="relative w-[42px]">
                        <div className="absolute top-[68px] right-0 left-[1px] h-[11px] bg-[#f00] pl-[4px] leading-[11px] text-black">101.900</div>
                        <div className="relative flex h-full flex-col justify-between pt-[26px] pb-[2px]">
                            {prices.map((price) => (
                                <div key={price} className="flex items-center gap-[3px]">
                                    <span className="h-px w-[2px] bg-white" />
                                    {price}
                                </div>
                            ))}
                        </div>
                        <div className="absolute top-[445px] right-0 left-[1px] h-[11px] bg-white pl-[4px] leading-[11px] text-black">101.588</div>
                    </div>
                </div>
                <div className="flex h-[17px] overflow-hidden">
                    {times.map((time) => (
                        <div key={time} className="w-16 shrink-0 whitespace-nowrap">
                            <div className="ml-px h-[3px] w-px bg-white" />
                            {time}
                        </div>
                    ))}
                </div>
            </div>
        </main>
    );
}

function ChartTabs() {
    return (
        <div className="mt-[2px] flex h-[21px] items-start border-t border-black text-[11px] text-[#707070]">
            {chartTabs.map((tab, index) => (
                <button
                    key={index}
                    type="button"
                    className={
                        tab.active
                            ? `-mt-px h-[19px] border border-t-0 border-black bg-white text-black shadow-[1px_1px_0_#a0a0a0] ${tab.width}`
                            : `relative h-[17px] ${tab.width} ${index === 6 ? "" : "after:absolute after:top-[3px] after:right-0 after:h-3 after:w-px after:bg-[#606060]"}`
                    }
                >
                    {tab.label}
                </button>
            ))}
            <div className="mt-[5px] mr-[7px] ml-auto flex gap-[10px]">
                <button type="button" aria-label="Влево">
                    <Icon size={7}><path d="M5 0v7L2 3.500z" fill="#808080" /></Icon>
                </button>
                <button type="button" aria-label="Вправо">
                    <Icon size={7}><path d="M2 0v7l3-3.500z" fill="#808080" /></Icon>
                </button>
            </div>
        </div>
    );
}

function OrderIcon({ color }: { color: string }) {
    return (
        <Icon size={16}>
            <path d="M1.500 1.500h8l3 3v9h-11z" fill="#fff" stroke="#6a6a6a" />
            <path d="M9.500 1.500v3h3" stroke="#6a6a6a" />
            <circle cx="11" cy="12" r="3.500" fill={color} />
            <circle cx="10" cy="11" r="1" fill="#fff9" />
        </Icon>
    );
}

function OrdersTable() {
    return (
        <table className="w-full table-fixed border-collapse text-[11px]">
            <thead>
                <tr className="h-[22px] border-b-2 border-[#d5d5d5] bg-linear-to-b from-white from-40% to-[#f1f2f4] to-45%">
                    <th className="w-[120px] border-r border-[#dcdcdc] pl-[6px] text-left font-normal">
                        <span className="flex items-center gap-[12px]">
                            Ордер
                            <Icon size={8}><path d="M1 7L4 1" stroke="#808080" /></Icon>
                        </span>
                    </th>
                    {columns.map((column, index) => (
                        <th key={index} className={`border-r border-[#dcdcdc] pr-[4px] text-right font-normal ${column.width}`}>
                            {column.label}
                        </th>
                    ))}
                    <th className="pr-[6px] text-right font-normal">Прибыль</th>
                </tr>
            </thead>
            <tbody>
                {orders.map((order, index) => (
                    <tr key={order.id} className={`h-[20px] border-b border-[#c8c8c8] ${index % 2 ? "bg-white" : "bg-[#eaeaea]"}`}>
                        <td className="border-r border-[#c8c8c8] pl-[2px]">
                            <span className="flex items-center gap-[3px]">
                                <OrderIcon color={index === 2 ? "#1788d8" : "#e0401a"} />
                                {order.id}
                            </span>
                        </td>
                        {order.cells.map((cell, cellIndex) => (
                            <td key={cellIndex} className="border-r border-[#c8c8c8] pr-[2px] text-right">
                                {cell}
                            </td>
                        ))}
                        <td className="pr-[6px]">
                            <span className="flex items-center justify-end gap-[9px]">
                                {order.profit}
                                <button type="button" aria-label={`Закрыть ${order.id}`}>
                                    <Icon size={9}><path d="M1.500 1.500l6 6M7.500 1.500l-6 6" stroke="#a0a0a0" strokeWidth="2" /></Icon>
                                </button>
                            </span>
                        </td>
                    </tr>
                ))}
            </tbody>
            <tfoot>
                <tr className="h-[21px] bg-[#c8c8c8] text-[10px] font-bold">
                    <td colSpan={12} className="pl-[2px]">
                        <span className="flex items-center gap-[3px]">
                            <Icon size={16}>
                                <path d="M1.500 1.500h11v12h-11z" fill="#fff" stroke="#8a8a8a" />
                                <path d="M5.500 4h3v3h2.500l-4 4-4-4h2.500z" fill="#e0401a" stroke="#902008" strokeWidth=".5" />
                            </Icon>
                            <span className="whitespace-pre">Баланс: 4 511.62 USD  Средства: 3 384.82  Залог: 800.00  Свободно: 2 584.82  Уровень: 423.10%</span>
                        </span>
                    </td>
                    <td className="pr-[24px] text-right">-1 126.80</td>
                </tr>
            </tfoot>
        </table>
    );
}

function Terminal() {
    return (
        <section className="mt-[2px] flex border-t border-white pt-[2px]">
            <div className="flex w-[15px] shrink-0 flex-col items-center">
                <button type="button" aria-label="Закрыть терминал" className="h-[13px]">
                    <Icon size={8}><path d="M1 1l5 5M6 1L1 6" stroke="#000" strokeWidth="1.500" /></Icon>
                </button>
                <div className="flex w-[13px] flex-1 rotate-180 items-center justify-start bg-linear-to-t from-[#d6e3f1] to-[#bccbdc] pt-[3px] text-[11px] leading-[13px] text-[#505a66] [writing-mode:vertical-rl]">
                    Терминал
                </div>
            </div>
            <div className="mr-[4px] min-w-0 flex-1 border-t border-l border-[#a0a0a0]">
                <div className="flex border-b border-black">
                    <div className="min-w-0 flex-1">
                        <OrdersTable />
                    </div>
                    <div className="flex w-[17px] shrink-0 flex-col items-center bg-[#f3f3f3] pt-[6px]">
                        <Icon size={7}><path d="M0 5l3.500-4L7 5z" fill="#404040" /></Icon>
                        <div className="mt-[18px] flex h-[55px] w-[15px] flex-col items-center justify-center gap-px rounded-[2px] border border-[#979797] bg-linear-to-r from-[#f4f4f4] to-[#cfcfcf]">
                            <span className="h-[2px] w-[7px] bg-[#606060]" />
                            <span className="h-[2px] w-[7px] bg-[#606060]" />
                            <span className="h-[2px] w-[7px] bg-[#606060]" />
                        </div>
                        <div className="mt-[4px]">
                            <Icon size={7}><path d="M0 2l3.500 4L7 2z" fill="#404040" /></Icon>
                        </div>
                    </div>
                </div>
                <div className="flex h-[21px] items-start pl-[1px] text-[11px] text-[#707070]">
                    <button type="button" className="-mt-px h-[19px] w-[68px] border border-t-0 border-black bg-white text-black">Торговля</button>
                    {terminalTabs.map((tab) => (
                        <button
                            key={tab.label}
                            type="button"
                            className={`relative h-[19px] pl-[8px] text-left whitespace-nowrap after:absolute after:top-[4px] after:right-0 after:h-3 after:w-px after:bg-[#606060] ${tab.width}`}
                        >
                            {tab.label}
                            {tab.count && <span className="ml-[2px] text-[9px] font-bold text-[#f00]">{tab.count}</span>}
                        </button>
                    ))}
                </div>
            </div>
        </section>
    );
}

function StatusBar() {
    const cells = ["w-[100px]", "w-[71px]", "w-[70px]", "w-[67px]", "w-[69px]", "w-[66px]"];
    return (
        <footer className="mt-[2px] flex h-[21px] items-end border-t border-b border-t-[#a0a0a0] border-b-[#6b5f58] text-[11px] leading-[15px]">
            <div className="flex-1 pl-[2px]">Для справки, нажмите F1</div>
            <div className="w-[116px] border-l border-[#a0a0a0] pl-[5px]">Default</div>
            {cells.map((width) => (
                <div key={width} className={`h-[15px] border-l border-[#a0a0a0] ${width}`} />
            ))}
            <div className="flex h-[15px] w-[162px] items-center border-l border-[#a0a0a0] pl-[5px]">
                <svg width="24" height="12" viewBox="0 0 24 12" shapeRendering="crispEdges" aria-hidden="true">
                    {[0, 1, 2, 3, 4, 5, 6, 7].map((bar) => (
                        <g key={bar}>
                            <rect x={bar * 3} y="0" width="2" height={9 - bar} fill="#5e7a0a" />
                            <rect x={bar * 3} y={10 - bar} width="2" height={2 + bar} fill="#123f66" />
                        </g>
                    ))}
                </svg>
                <span className="ml-[44px] flex-1">564/9 kb</span>
                <svg width="14" height="12" viewBox="0 0 14 12" className="mr-[2px]" aria-hidden="true">
                    <path d="M0 1.500q3 1.500 7 0t7-.5v10q-3-.5-7 .5t-7 0z" fill="#d32626" />
                    <path d="M0 1.500q3 1.500 7 0t7-.5v7q-3-.5-7 .5t-7 0z" fill="#2b48d8" />
                    <path d="M0 1.500q3 1.500 7 0t7-.5v3q-3-.5-7 .5t-7 0z" fill="#fafafc" />
                </svg>
            </div>
        </footer>
    );
}

function App() {
    return (
        <div className={`min-h-screen overflow-hidden bg-[#f0f0f0] text-black ${ui}`}>
            <TitleBar />
            <MenuBar />
            <MainToolbar />
            <DrawToolbar />
            <ChartWindow />
            <ChartTabs />
            <Terminal />
            <StatusBar />
        </div>
    );
}

export default App;
